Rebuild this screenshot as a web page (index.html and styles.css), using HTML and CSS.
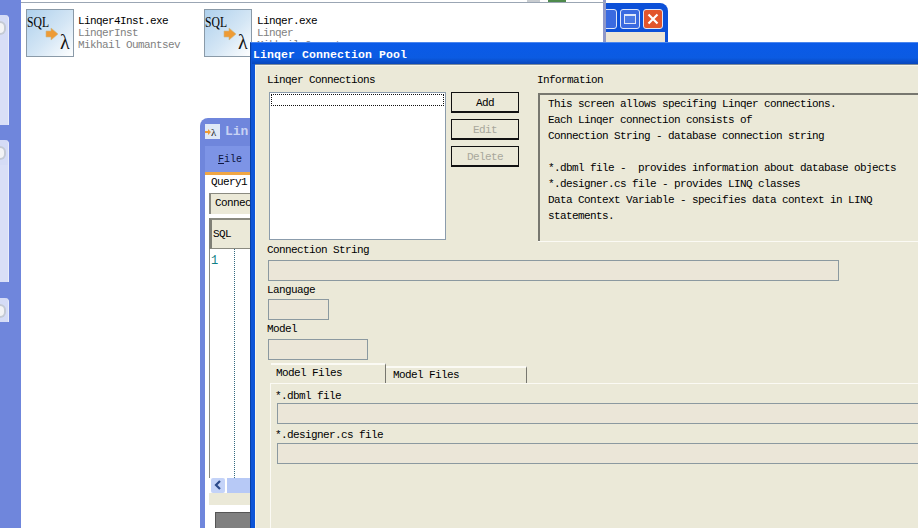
FILE: index.html
```html
<!DOCTYPE html>
<html lang="en">
<head>
<meta charset="utf-8">
<title>Linger Connection Pool</title>
<link rel="stylesheet" href="styles.css">
</head>
<body>
<div class="desktop">
  <aside class="sidebar">
    <div class="panel panel-a"><span class="knob"></span></div>
    <div class="panel panel-b"><span class="knob"></span></div>
    <div class="panel panel-c"><span class="knob"></span></div>
  </aside>

  <div class="backwin">
    <div class="wbtn wbtn-min"></div>
    <div class="wbtn wbtn-max"><span></span></div>
    <div class="wbtn wbtn-close">
      <svg viewBox="0 0 20 20" width="18" height="18"><path d="M5 5L15 15M15 5L5 15" stroke="#fff" stroke-width="2.4" fill="none"/></svg>
    </div>
    <div class="backwin-body"></div>
  </div>

  <section class="explorer">
    <div class="topbits"><i class="bit-grey"></i><i class="bit-green"></i></div>
    <div class="files">
      <div class="file file-a">
        <svg class="fileicon" viewBox="0 0 48 48" width="48" height="48">
          <defs><linearGradient id="g1" x1="0" y1="0" x2="1" y2="1"><stop offset="0" stop-color="#aed0ec"/><stop offset=".55" stop-color="#d4e6f5"/><stop offset="1" stop-color="#fff"/></linearGradient></defs>
          <rect x=".5" y=".5" width="47" height="47" fill="url(#g1)" stroke="#8a9aa8"/>
          <text x="1" y="18" class="icon-sql" textLength="22" lengthAdjust="spacingAndGlyphs">SQL</text>
          <path d="M20 22h5v-3l7 6-7 6v-3h-5z" fill="#ee9b35" stroke="#c9b98a" stroke-width=".6"/>
          <text x="34" y="40" class="icon-lambda">λ</text>
        </svg>
        <div class="filetext"><div>Linqer4Inst.exe</div><div class="dim">LinqerInst</div><div class="dim">Mikhail Oumantsev</div></div>
      </div>
      <div class="file file-b">
        <svg class="fileicon" viewBox="0 0 48 48" width="48" height="48">
          <defs><linearGradient id="g2" x1="0" y1="0" x2="1" y2="1"><stop offset="0" stop-color="#aed0ec"/><stop offset=".55" stop-color="#d4e6f5"/><stop offset="1" stop-color="#fff"/></linearGradient></defs>
          <rect x=".5" y=".5" width="47" height="47" fill="url(#g2)" stroke="#8a9aa8"/>
          <text x="1" y="18" class="icon-sql" textLength="22" lengthAdjust="spacingAndGlyphs">SQL</text>
          <path d="M20 22h5v-3l7 6-7 6v-3h-5z" fill="#ee9b35" stroke="#c9b98a" stroke-width=".6"/>
          <text x="34" y="40" class="icon-lambda">λ</text>
        </svg>
        <div class="filetext"><div>Linqer.exe</div><div class="dim">Linqer</div><div class="dim">Mikhail Oumantsev</div></div>
      </div>
    </div>
  </section>

  <section class="linqer">
    <div class="lq-title">
      <svg viewBox="0 0 15 15" width="15" height="15"><rect width="15" height="15" fill="#dfe9f6"/><path d="M0 7h3V5l3 3-3 3V9H0z" fill="#ee9b35"/><text x="6" y="12" class="lq-lambda">λ</text></svg>
      <span>Lin</span>
    </div>
    <div class="lq-menu"><span><u>F</u>ile</span></div>
    <div class="lq-main">
      <div class="lq-tab">Query1</div>
      <div class="lq-conn">Connec</div>
      <div class="lq-sql">SQL</div>
      <div class="lq-editor"><span class="lq-num">1</span><span class="lq-dots"></span></div>
      <div class="lq-scroll">
        <span class="lq-arrow"><svg viewBox="0 0 14 14" width="14" height="14"><path d="M9 3L5 7l4 4" fill="none" stroke="#2b4a8a" stroke-width="2.2"/></svg></span>
        <span class="lq-track"></span>
      </div>
      <div class="lq-sep"></div>
      <div class="lq-bottom"><div class="lq-grey"></div></div>
    </div>
  </section>

  <section class="dialog">
    <header class="dlg-title">Linqer Connection Pool</header>
    <div class="dlg-body">
      <div class="top-row">
        <div class="conn-col">
          <div class="lbl">Linqer Connections</div>
          <div class="conn-row">
            <div class="listbox"><div class="listitem"></div></div>
            <div class="btns">
              <button class="btn" type="button">Add</button>
              <button class="btn off" type="button">Edit</button>
              <button class="btn off" type="button">Delete</button>
            </div>
          </div>
        </div>
        <div class="info-col">
          <div class="lbl">Information</div>
          <div class="info">This screen allows specifing Linqer connections.
Each Linqer connection consists of
Connection String - database connection string

*.dbml file -  provides information about database objects
*.designer.cs file - provides LINQ classes
Data Context Variable - specifies data context in LINQ
statements.</div>
        </div>
      </div>
      <div class="lbl f-first">Connection String</div>
      <div class="field w-conn"></div>
      <div class="lbl f-lang">Language</div>
      <div class="field w-lang"></div>
      <div class="lbl f-model">Model</div>
      <div class="field w-model"></div>
      <div class="tabs">
        <div class="tab on">Model Files</div>
        <div class="tab">Model Files</div>
      </div>
      <div class="page">
        <div class="lbl p-lbl">*.dbml file</div>
        <div class="field w-full"></div>
        <div class="lbl p-lbl p-next">*.designer.cs file</div>
        <div class="field w-full"></div>
      </div>
    </div>
  </section>
</div>
</body>
</html>
```

FILE: styles.css
```css
* { box-sizing: border-box; }
html, body { margin: 0; height: 100%; overflow: hidden; background: #fff; }
body { font: 11px/12px "Liberation Mono", monospace; letter-spacing: -.6px; color: #000; }

.desktop { position: relative; width: 918px; height: 528px; overflow: hidden; background: #fff; }

/* left task pane */
.sidebar { position: absolute; left: 0; top: 0; width: 21px; height: 528px; background: #6f86dc; }
.panel { position: absolute; left: 0; width: 9px; background: #d5dcf6; border-radius: 0 4px 0 0; border-right: 1px solid #e9edfb; }
.panel-a { top: 15px; height: 110px; }
.panel-b { top: 140px; height: 142px; }
.panel-c { top: 298px; height: 24px; }
.knob { display: block; width: 6px; height: 14px; margin: 6px 0 0 0; border-radius: 0 7px 7px 0; background: #f2f3f5; border: 2px solid #c4cad4; border-left: 0; }
.panel-a::after, .panel-b::after { content: ""; position: absolute; left: 0; top: 25px; right: 0; bottom: 0; background: #d9dff7; }

/* window peeking out behind the explorer */
.backwin { position: absolute; left: 590px; top: 3px; width: 78px; height: 42px; background: #0c50d8; border-radius: 0 8px 0 0; display: flex; gap: 3px; justify-content: flex-end; padding: 6px 5px 0 0; }
.wbtn { width: 20px; height: 20px; border: 1px solid #dfe6f8; border-radius: 3px; background: #3a6ae0; }
.wbtn-max span { display: block; width: 12px; height: 10px; margin: 4px 3px; border: 1px solid #dfe6f8; border-top-width: 2px; background: #4c7ae4; }
.wbtn-close { background: #e2552c; }
.backwin-body { position: absolute; left: 0; right: 3px; top: 29px; height: 10px; background: #ece5d6; }

/* explorer */
.explorer { position: absolute; left: 21px; top: 0; width: 585px; height: 44px; background: #fff; border-right: 3px solid #8f98c9; }
.topbits { height: 3px; border-bottom: 1px solid #9ba6b4; position: relative; margin-right: -3px; }
.bit-grey { position: absolute; left: 506px; top: 0; width: 13px; height: 2px; background: #c8ccd0; }
.bit-green { position: absolute; left: 527px; top: 0; width: 18px; height: 2px; background: #4e8a4c; }
.files { display: flex; padding: 6px 0 0 5px; }
.file { display: flex; height: 48px; }
.file-a { width: 178px; gap: 4px; }
.file-b { gap: 5px; }
.fileicon { flex: none; }
.icon-sql { font: 15px "Liberation Serif", serif; fill: #000; letter-spacing: 0; }
.icon-lambda { font: 20px "Liberation Serif", serif; fill: #111; letter-spacing: 0; }
.filetext { padding-top: 6px; white-space: nowrap; }
.dim { color: #7f7f7f; }

/* linqer main window, behind the dialog */
.linqer { position: absolute; left: 200px; top: 118px; width: 52px; height: 410px; background: #6f86dc; border-radius: 8px 0 0 0; overflow: hidden; padding-left: 5px; }
.lq-title { height: 28px; display: flex; align-items: center; gap: 5px; color: #c7d2f4; font-weight: bold; font-size: 13px; letter-spacing: 0; white-space: nowrap; padding-bottom: 1px; }
.lq-title svg { flex: none; }
.lq-lambda { font: 11px "Liberation Serif", serif; fill: #222; }
.lq-menu { height: 29px; padding: 8px 0 0 13px; background: #7d94e6; border-bottom: 3px solid #f0a645; white-space: nowrap; color: #0c1440; letter-spacing: 0; font-size: 10px; }
.lq-main { background: #fff; height: 353px; white-space: nowrap; overflow: hidden; }
.lq-tab { height: 18px; padding: 1px 0 0 6px; background: #fff; }
.lq-conn { height: 21px; margin-left: 4px; padding: 3px 0 0 4px; background: #ebe9d8; border-left: 2px solid #8a8a80; border-top: 1px solid #8a8a80; }
.lq-sql { height: 31px; margin: 4px 0 0 4px; padding: 8px 0 0 1px; background: #ebe9d8; border-left: 3px solid #7f7f76; border-top: 2px solid #8a8a80; border-bottom: 1px solid #8a8a80; }
.lq-editor { position: relative; height: 229px; margin-left: 4px; background: #fff; border-left: 1px solid #8a8a80; padding: 6px 0 0 1px; color: #0f7f86; }
.lq-num { font-size: 12px; }
.lq-dots { position: absolute; left: 24px; top: 0; bottom: 0; border-left: 1px dotted #336a80; }
.lq-scroll { display: flex; height: 15px; margin-left: 4px; gap: 2px; background: #fff; padding-left: 2px; }
.lq-arrow { width: 14px; height: 15px; background: #c4d3f8; border-radius: 2px; }
.lq-track { flex: 1; background: #b7c9f6; }
.lq-sep { height: 12px; background: #ebe9d8; margin-left: 4px; }
.lq-bottom { padding: 7px 0 0 6px; height: 40px; background: #fff; margin-left: 4px; }
.lq-grey { height: 40px; background: #808080; border: 1px solid #555; }

/* dialog */
.dialog { position: absolute; left: 250px; top: 42px; width: 668px; height: 486px; background: #0d55d8; padding: 0 0 0 4px; border-left: 1px solid #0840a8; border-top: 1px solid #4a86ee; }
.dlg-title { height: 21px; margin-left: -3px; padding: 6px 0 0 1px; color: #fff; font-weight: bold; font-size: 11.5px; letter-spacing: .1px; background: linear-gradient(#0a5ae8, #0b5be2 70%, #0846bc); white-space: nowrap; }
.dlg-body { height: 464px; margin-top: 1px; background: #ebe9d8; border-top: 1px solid #f6f5ec; border-left: 1px solid #f6f5ec; padding: 9px 0 0 11px; box-shadow: 0 -1px 0 #7c8a98; }
.lbl { height: 12px; line-height: 10px; white-space: nowrap; }
.top-row { display: flex; }
.conn-col { width: 270px; flex: none; }
.conn-row { display: flex; gap: 5px; margin-top: 5px; margin-left: 2px; }
.listbox { width: 177px; height: 148px; background: #fff; border: 1px solid #8b9cac; padding: 1px; }
.listitem { height: 12px; border: 1px dotted #111; }
.btns { display: flex; flex-direction: column; gap: 6px; }
.btn { width: 68px; height: 21px; padding: 1px 0 0; background: #ebe9d8; border: 1px solid #111; border-bottom-width: 2px; font: inherit; letter-spacing: inherit; color: #000; }
.btn.off { color: #a8a79c; }
.info-col { flex: 1; min-width: 0; }
.info { height: 148px; margin: 6px 0 0 1px; padding: 1px 0 0 8px; border-left: 2px solid #77776f; border-top: 2px solid #77776f; box-shadow: 0 1px 0 #fbfaf4; line-height: 16px; white-space: pre; }
.field { height: 21px; background: #ebe6d8; border: 1px solid #8b99a0; margin-left: 1px; }
.f-first { margin-top: 4px; }
.w-conn { width: 571px; margin-top: 3px; }
.f-lang { margin-top: 4px; }
.w-lang { width: 61px; margin-top: 2px; }
.f-model { margin-top: 4px; }
.w-model { width: 100px; margin-top: 3px; }
.tabs { display: flex; align-items: flex-end; height: 23px; margin-left: 4px; }
.tab { width: 141px; height: 17px; padding: 1px 0 0 7px; border-top: 2px solid #fbfaf4; border-right: 1px solid #77776f; }
.tab.on { width: 115px; height: 20px; padding: 2px 0 0 5px; background: #ebe9d8; }
.page { border-top: 1px solid #fbfaf4; border-left: 1px solid #fbfaf4; margin-left: 3px; padding: 7px 0 0 6px; height: 150px; }
.page .field { margin-left: 0; width: 660px; }
.p-lbl { margin-left: -2px; }
.p-next { margin-top: 6px; margin-bottom: 1px; }
```
